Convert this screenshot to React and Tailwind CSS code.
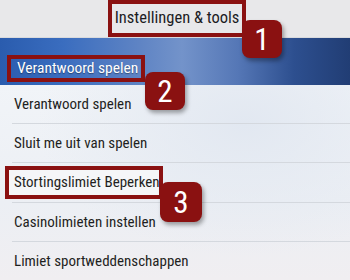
import React from "react";

const font = "font-['Liberation_Sans_Narrow','Roboto_Condensed','Liberation_Sans',sans-serif]";

function Badge({ n, className }) {
  return (
    <div
      className={
        "absolute w-[40px] h-[38px] rounded-[8px] bg-[#8a1111] text-white text-[31px] leading-none flex items-center justify-center shadow-[2px_3px_4px_rgba(0,0,0,0.35)] " +
        className
      }
    >
      {n}
    </div>
  );
}

function Row({ children, h = "h-[39px]", last = false }) {
  return (
    <div className={"flex flex-col " + h}>
      <div className="flex-1 flex items-center pl-[14px] text-[15px] text-[#1f1f22] whitespace-nowrap">{children}</div>
      {!last && <div className="ml-[12px] h-px bg-[#d4d8de]" />}
    </div>
  );
}

export default function App() {
  return (
    <div className={"relative w-[350px] h-[280px] overflow-hidden bg-[#eef1f5] " + font}>
      {/* top bar */}
      <div className="h-[38px] bg-[#e8e8ea] flex justify-center border-b border-[#d9dadd]">
        <div className="ml-[4px] w-[138px] h-[37px] border-[4px] border-[#8a1111] flex items-center justify-center text-[16.5px] text-[#1c1c1f] whitespace-nowrap">
          Instellingen &amp; tools
        </div>
      </div>

      {/* blue band */}
      <div className="h-[47px] pl-[7px] pt-[17px] bg-[linear-gradient(90deg,#2a5cae_0%,#3a6dbf_18%,#5f84c4_40%,#7393ca_52%,#5577b6_68%,#2d4f8f_84%,#213d74_100%)]">
        <div className="w-[138px] h-[27px] border-[4px] border-[#8a1111] flex items-center pl-[6px] text-[15.5px] text-white whitespace-nowrap [text-shadow:0_1px_1px_rgba(0,0,0,0.4)]">
          Verantwoord spelen
        </div>
      </div>

      {/* list */}
      <div className="bg-[radial-gradient(ellipse_at_70%_20%,#e2e8f1_0%,transparent_60%),linear-gradient(180deg,#f1f4f8_0%,#eceff4_60%,#f0eef1_100%)]">
        <Row>Verantwoord spelen</Row>
        <Row>Sluit me uit van spelen</Row>
        <Row h="h-[40px]">
          <div className="-ml-[9px] w-[158px] h-[33px] border-[4px] border-[#8a1111] bg-[#f5f6f8] flex items-center pl-[5px]">
            Stortingslimiet Beperken
          </div>
        </Row>
        <Row>Casinolimieten instellen</Row>
        <Row h="h-[38px]" last>Limiet sportweddenschappen</Row>
      </div>

      <Badge n="1" className="left-[242px] top-[20px]" />
      <Badge n="2" className="left-[145px] top-[72px]" />
      <Badge n="3" className="left-[160px] top-[182px] w-[42px] h-[40px]" />
    </div>
  );
}
